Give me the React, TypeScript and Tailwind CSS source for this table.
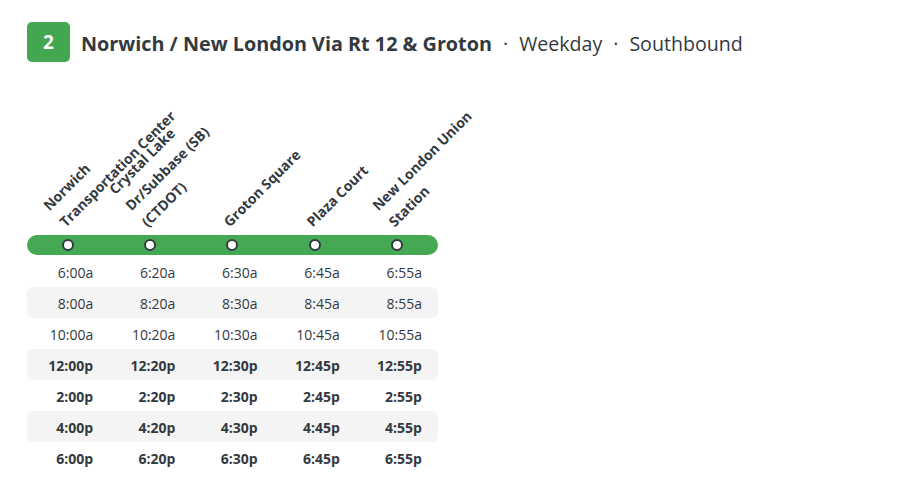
import React from "react";

const stops = [
  "Norwich Transportation Center",
  "Crystal Lake Dr/Subbase (SB) (CTDOT)",
  "Groton Square",
  "Plaza Court",
  "New London Union Station",
];

const trips: { times: string[]; pm: boolean }[] = [
  { times: ["6:00a", "6:20a", "6:30a", "6:45a", "6:55a"], pm: false },
  { times: ["8:00a", "8:20a", "8:30a", "8:45a", "8:55a"], pm: false },
  { times: ["10:00a", "10:20a", "10:30a", "10:45a", "10:55a"], pm: false },
  { times: ["12:00p", "12:20p", "12:30p", "12:45p", "12:55p"], pm: true },
  { times: ["2:00p", "2:20p", "2:30p", "2:45p", "2:55p"], pm: true },
  { times: ["4:00p", "4:20p", "4:30p", "4:45p", "4:55p"], pm: true },
  { times: ["6:00p", "6:20p", "6:30p", "6:45p", "6:55p"], pm: true },
];

function Header() {
  return (
    <div className="flex items-center h-[40px]">
      <div className="w-[43px] h-[40px] rounded-[5px] bg-[#43a651] flex items-center justify-center text-white font-bold text-[19px]">
        2
      </div>
      <div className="ml-[11px] pt-[4px] text-[19.6px] text-[#333a3f] flex items-center">
        <span className="font-bold text-[19.8px]">Norwich / New London Via Rt 12 &amp; Groton</span>
        <span className="mx-[11px]">·</span>
        <span>Weekday</span>
        <span className="mx-[11px]">·</span>
        <span>Southbound</span>
      </div>
    </div>
  );
}

function StopLabels() {
  return (
    <div className="grid grid-cols-5 h-[160px]">
      {stops.map((s) => (
        <div key={s} className="relative">
          <div className="absolute left-[43px] bottom-[3px] w-[160px] origin-bottom-left -rotate-45 text-[14px] leading-[23px] font-bold text-[#333a3f]">
            {s}
          </div>
        </div>
      ))}
    </div>
  );
}

export default function App() {
  return (
    <div className="w-[901px] h-[495px] bg-white pl-[27px] pt-[22px] font-['Open_Sans',sans-serif]">
      <Header />
      <div className="w-[411px] mt-[13px]">
        <StopLabels />
        <div className="h-[20px] rounded-full bg-[#45a853] grid grid-cols-5">
          {stops.map((s) => (
            <div key={s} className="flex items-center justify-center">
              <div className="w-[12px] h-[12px] rounded-full bg-white border-[2.5px] border-[#333a3f]" />
            </div>
          ))}
        </div>
        <div className="mt-px">
          {trips.map((t, i) => (
            <div
              key={i}
              className={`grid grid-cols-5 h-[31px] rounded-[6px] items-center text-[14px] text-[#333a3f] ${
                i % 2 === 1 ? "bg-[#f4f4f4]" : ""
              } ${t.pm ? "font-bold" : ""}`}
            >
              {t.times.map((tm, j) => (
                <div key={j} className="text-right pr-[16px] pt-px">
                  {tm}
                </div>
              ))}
            </div>
          ))}
        </div>
      </div>
    </div>
  );
}
